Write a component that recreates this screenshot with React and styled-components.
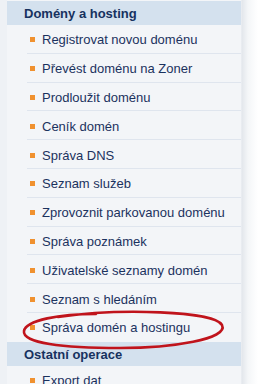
import React from "react";
import styled, { createGlobalStyle } from "styled-components";

const GlobalStyle = createGlobalStyle`
  html, body {
    margin: 0;
    padding: 0;
    background: #ffffff;
  }
`;

const Page = styled.div`
  position: relative;
  width: 274px;
  height: 384px;
  overflow: hidden;
  background: linear-gradient(
    to right,
    #eef1f5 0px,
    #eef1f5 241px,
    #e3e7ec 242px,
    #f4f6f8 248px,
    #ffffff 258px
  );
  font-family: "Liberation Sans", Arial, sans-serif;
`;

const Panel = styled.div`
  margin-left: 7px;
  width: 234px;
  padding-top: 1px;
  background: #f3f5f8;
  min-height: 384px;
`;

const Header = styled.div`
  height: 24px;
  line-height: 26px;
  padding-left: 17px;
  background: #d4e1ee;
  color: #17325f;
  font-weight: bold;
  font-size: 13px;
`;

const List = styled.ul`
  list-style: none;
  margin: 0;
  padding: 0;
`;

const Item = styled.li`
  display: flex;
  align-items: center;
  gap: 7px;
  height: 28.8px;
  margin-left: 20px;
  padding-left: 3px;
  padding-top: 2px;
  box-sizing: border-box;
  border-bottom: 1px solid ${(p) => (p.$last ? "transparent" : "#dfe5ee")};
  color: #1b325e;
  font-size: 13px;
`;

const Bullet = styled.span`
  width: 5px;
  height: 5px;
  background: #f0912f;
  flex: none;
`;

const Mark = styled.svg`
  position: absolute;
  left: 0;
  top: 0;
  pointer-events: none;
`;

const domains = [
  "Registrovat novou doménu",
  "Převést doménu na Zoner",
  "Prodloužit doménu",
  "Ceník domén",
  "Správa DNS",
  "Seznam služeb",
  "Zprovoznit parkovanou doménu",
  "Správa poznámek",
  "Uživatelské seznamy domén",
  "Seznam s hledáním",
  "Správa domén a hostingu",
];

const other = ["Export dat"];

export default function App() {
  return (
    <>
      <GlobalStyle />
      <Page>
        <Panel>
          <Header>Domény a hosting</Header>
          <List>
            {domains.map((d, i) => (
              <Item key={d} $last={i === domains.length - 1}>
                <Bullet />
                {d}
              </Item>
            ))}
          </List>
          <Header>Ostatní operace</Header>
          <List>
            {other.map((d) => (
              <Item key={d}>
                <Bullet />
                {d}
              </Item>
            ))}
          </List>
        </Panel>
        <Mark width="274" height="384" viewBox="0 0 274 384">
          <path
            d="M58 317 C 120 308, 214 311, 222 325 C 229 339, 172 348, 120 348 C 62 348, 22 343, 24 331 C 26 320, 60 314, 96 314"
            fill="none"
            stroke="#c0141c"
            strokeWidth="2.6"
            strokeLinecap="round"
          />
        </Mark>
      </Page>
    </>
  );
}
